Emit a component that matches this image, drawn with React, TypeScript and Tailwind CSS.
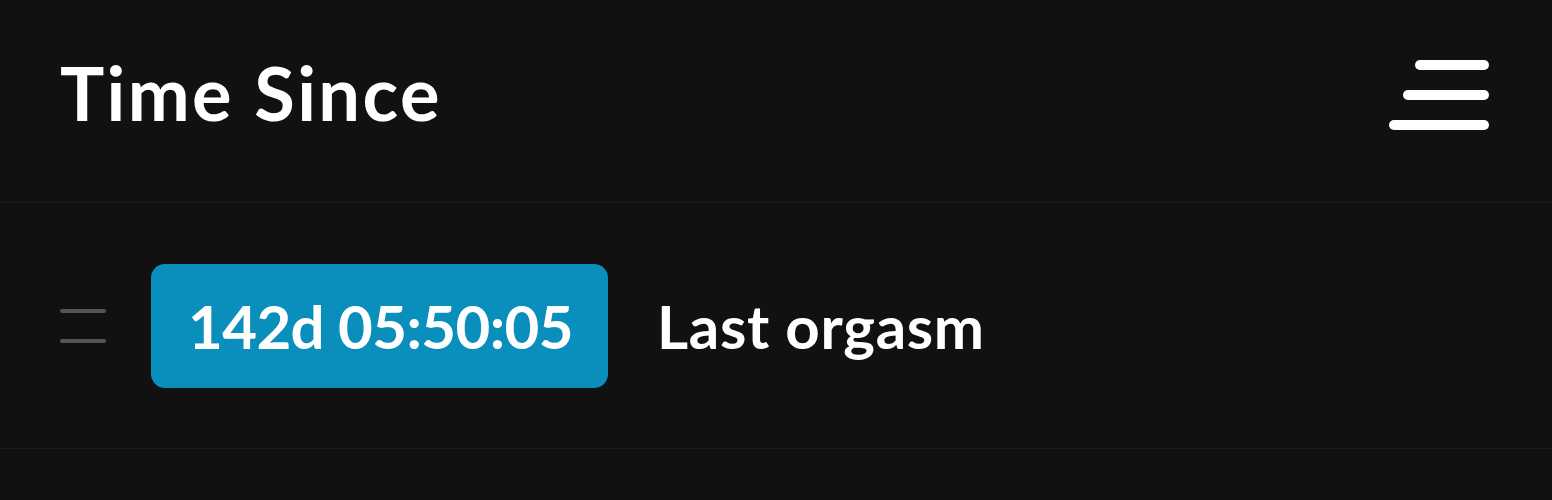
import React from "react";

export default function App() {
  return (
    <div className="w-[1552px] h-[500px] bg-[#111111] text-white overflow-hidden" style={{ fontFamily: "Lato, 'Noto Sans', sans-serif" }}>
      <div className="h-[203px] flex items-center justify-between pl-[60px] pr-[62px] border-b border-[#1d1d1d]">
        <h1 className="text-[74px] font-bold leading-none tracking-[2.4px] -mt-[16px]">Time Since</h1>
        <svg width="102" height="72" viewBox="0 0 102 72" className="-mt-[12px]">
          <line x1="32" y1="6" x2="96" y2="6" stroke="white" strokeWidth="10" strokeLinecap="round" />
          <line x1="20" y1="36" x2="96" y2="36" stroke="white" strokeWidth="10" strokeLinecap="round" />
          <line x1="6" y1="66" x2="96" y2="66" stroke="white" strokeWidth="10" strokeLinecap="round" />
        </svg>
      </div>
      <div className="h-[246px] flex items-center pl-[60px] border-b border-[#1d1d1d]">
        <div className="w-[46px] flex flex-col gap-[26px]">
          <div className="h-[4px] rounded-full bg-[#555555]" />
          <div className="h-[4px] rounded-full bg-[#555555]" />
        </div>
        <div className="ml-[45px] h-[124px] pl-[37px] pr-[35px] flex items-center rounded-[14px] bg-[#0a8fbd]">
          <span className="text-[60px] font-bold leading-none tracking-[-0.6px]">142d 05:50:05</span>
        </div>
        <span className="ml-[49px] text-[60px] font-bold leading-none tracking-[0.7px]">Last orgasm</span>
      </div>
    </div>
  );
}
